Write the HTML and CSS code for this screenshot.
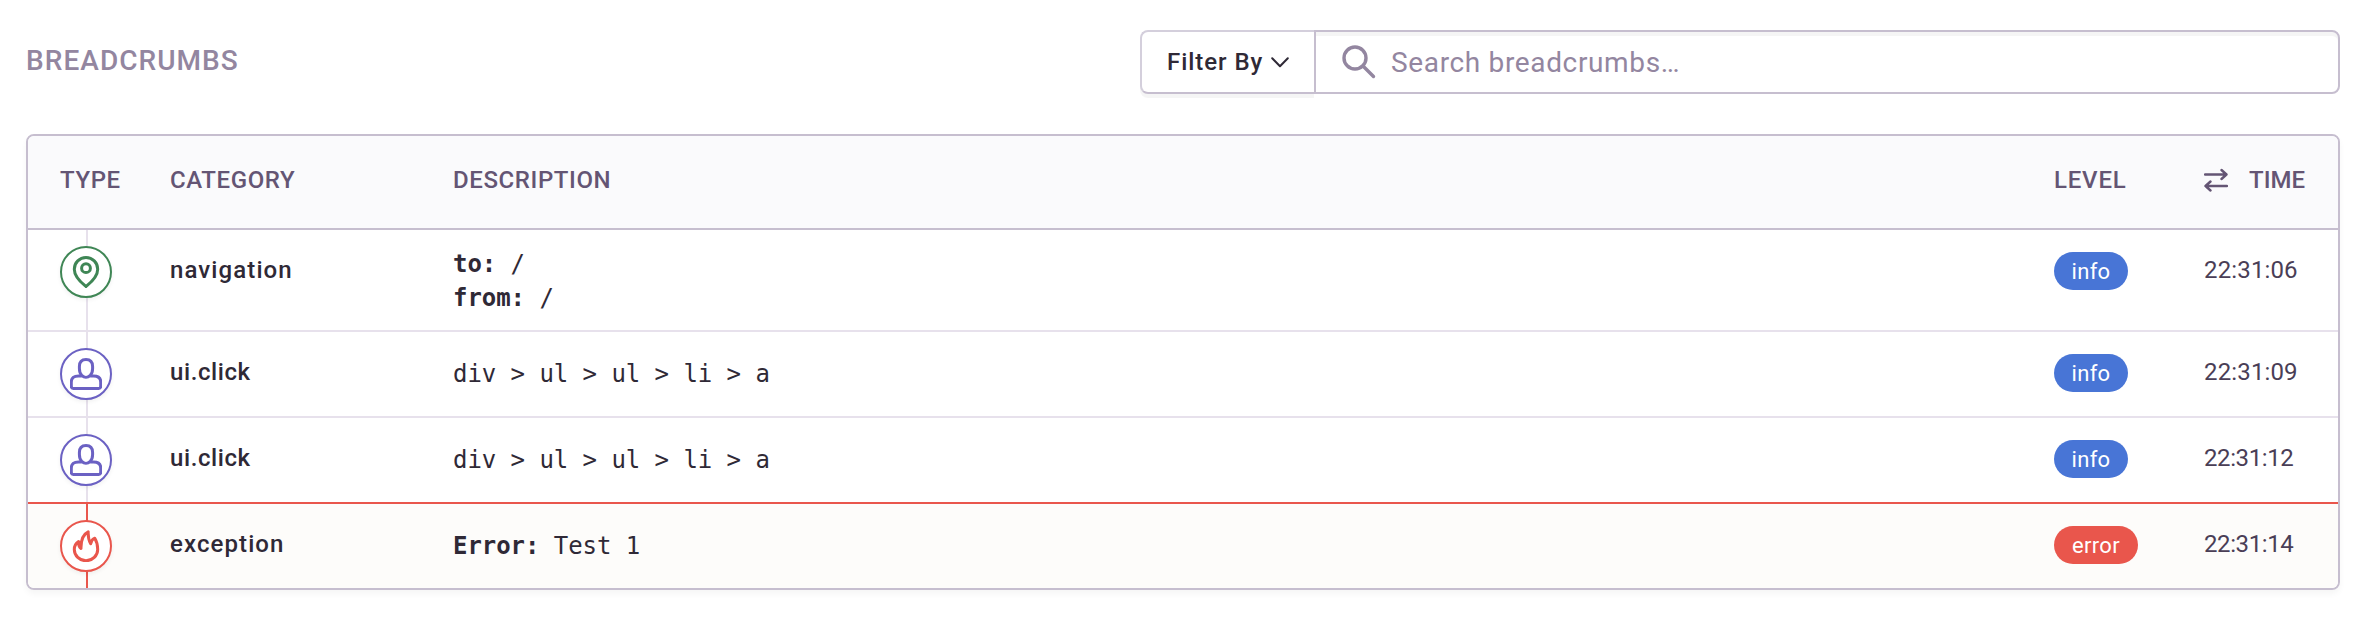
FILE: index.html
```html
<!DOCTYPE html>
<html lang="en">
<head>
<meta charset="utf-8">
<title>Breadcrumbs</title>
<link rel="stylesheet" href="styles.css">
</head>
<body>
<svg class="defs" aria-hidden="true">
  <symbol id="pin" viewBox="0 0 32 32"><path d="M16 30.5C13 28 4.300 21.500 4.300 13.200a11.700 11.700 0 0 1 23.400 0C27.700 21.500 19 28 16 30.500Z"/><circle cx="16" cy="12.200" r="4.400"/></symbol>
  <symbol id="user" viewBox="0 0 32 32"><path d="M12 17.600C10 16 9.400 13.500 9.400 10.500V8.500C9.400 4 12 1.500 16 1.500s6.600 2.500 6.600 7v2c0 3-.6 5.500-2.600 7.100-2.300 2.200-5.700 2.200-8 0Z"/><path d="M11 17.900H8.500C4 17.900 1.300 20 1.300 24v4.300c0 1.300.7 2.100 2 2.100h25.400c1.300 0 2-.8 2-2.100V24c0-4-2.700-6.100-7.200-6.100H21"/></symbol>
  <symbol id="fire" viewBox="0 0 32 32"><path d="M18.200 1.800C12.500 4.500 10.800 10 11 18.500 9.500 17.500 8.500 15 8.600 11.600 5.500 13.500 4.300 16.500 4.300 19.500a11.700 11.200 0 0 0 23.400 0c0-4-.9-8-2.900-11.300-2.300.8-3.500 2.800-4.100 5.500-1.800-3-2.700-7-2.500-11.900Z"/></symbol>
</svg>
<main class="page">
  <header class="top">
    <h1 class="title">BREADCRUMBS</h1>
    <div class="search">
      <button class="filter"><span class="filter-label">Filter By</span>
        <svg class="chevron" viewBox="0 0 18 11"><path d="M1.200 1.300 9 9.300l7.800-8"/></svg>
      </button>
      <div class="field">
        <svg class="lens" viewBox="0 0 34 34"><circle cx="13" cy="13" r="11"/><path d="M21 21 31.500 31.500"/></svg>
        <span class="placeholder">Search breadcrumbs…</span>
      </div>
    </div>
  </header>
  <section class="table">
    <div class="row head">
      <div class="th type">TYPE</div><div class="th category">CATEGORY</div><div class="th description">DESCRIPTION</div><div class="th level-head">LEVEL</div>
      <div class="th time-head"><svg class="swap" viewBox="0 0 24 24"><path d="M1 6.500h21.500M17.500 2l5 4.500-5 4.500M23 18H1.500M6.500 13.500l-5 4.500 5 4.500"/></svg><span class="time-label">TIME</span></div>
    </div>
    <div class="row body tall">
      <div class="rail"><span class="badge green"><svg class="icon"><use href="#pin"/></svg></span></div>
      <div class="name navigation">navigation</div>
      <div class="code"><div><b>to:</b> /</div><div><b>from:</b> /</div></div>
      <div class="level"><span class="pill">info</span></div><div class="time">22:31:06</div>
    </div>
    <div class="row body">
      <div class="rail"><span class="badge purple"><svg class="icon"><use href="#user"/></svg></span></div>
      <div class="name click">ui.click</div>
      <div class="code">div &gt; ul &gt; ul &gt; li &gt; a</div>
      <div class="level"><span class="pill">info</span></div><div class="time">22:31:09</div>
    </div>
    <div class="row body before-error">
      <div class="rail"><span class="badge purple"><svg class="icon"><use href="#user"/></svg></span></div>
      <div class="name click">ui.click</div>
      <div class="code">div &gt; ul &gt; ul &gt; li &gt; a</div>
      <div class="level"><span class="pill">info</span></div><div class="time narrow">22:31:12</div>
    </div>
    <div class="row body error">
      <div class="rail"><span class="badge red"><svg class="icon"><use href="#fire"/></svg></span></div>
      <div class="name exception">exception</div>
      <div class="code"><b>Error:</b> Test 1</div>
      <div class="level"><span class="pill danger">error</span></div><div class="time narrow">22:31:14</div>
    </div>
  </section>
</main>
</body>
</html>
```
FILE: styles.css
```css
* { box-sizing: border-box; }
body { margin: 0; background: #fff; color: #2f2936; font-family: Roboto, sans-serif; font-size: 24px; }
.defs { position: absolute; width: 0; height: 0; }
svg { fill: none; stroke: currentColor; stroke-linecap: round; stroke-linejoin: round; flex: none; }
.page { padding: 30px 30px 32px 26px; }
.top { display: flex; justify-content: space-between; height: 64px; margin-bottom: 40px; }
.title { margin: 15px 0 0; font-size: 28px; line-height: 32px; font-weight: 500; color: #9386a0; letter-spacing: 1.05px; }
.search { display: flex; width: 1200px; }
.filter { width: 174px; border: 2px solid #d4cfdc; border-bottom-color: #c6becf; border-right: 0; border-radius: 8px 0 0 8px; background: #fff; box-shadow: 0 4px 0 rgba(0,0,0,.04); padding: 0 0 0 25px; display: flex; align-items: center; gap: 8px; font: 500 24px Roboto, sans-serif; color: #2f2936; }
.filter-label { width: 96px; white-space: nowrap; text-align: left; letter-spacing: 0.95px; }
.chevron { width: 18px; height: 11px; stroke-width: 2; }
.field { flex: 1; border: 2px solid #c6becf; border-radius: 0 8px 8px 0; box-shadow: inset 0 4px 0 rgba(0,0,0,.04); display: flex; align-items: center; padding-left: 26px; color: #9386a0; }
.lens { width: 34px; height: 34px; stroke-width: 3.4; margin-right: 15px; }
.placeholder { font-size: 28px; letter-spacing: 0.65px; }
.table { border: 2px solid #c6becf; border-radius: 8px; overflow: hidden; box-shadow: 0 4px 6px rgba(0,0,0,.04); }
.row { display: grid; grid-template-columns: 110px 283px 1fr 150px 134px; padding-left: 32px; }
.head { height: 94px; border-bottom: 2px solid #c6becf; background: #fafafc; color: #645574; }
.th { padding-top: 30px; line-height: 28px; font-weight: 500; white-space: nowrap; letter-spacing: 0.6px; }
.level-head { letter-spacing: 0.8px; }
.time-head { display: flex; gap: 21px; letter-spacing: 0; }
.swap { width: 24px; height: 24px; stroke-width: 2.4; margin-top: 2px; }
.body { height: 86px; border-bottom: 2px solid #e7e1ec; }
.tall { height: 102px; }
.before-error { border-bottom-color: #e9564c; }
.error { height: 84px; border-bottom: 0; background: #fdfcfa; --rail: #e9564c; }
.rail { width: 52px; height: 100%; padding-top: 16px; background: linear-gradient(var(--rail, #e7e1ec), var(--rail, #e7e1ec)) 26px 0 / 2px 100% no-repeat; }
.badge { display: flex; align-items: center; justify-content: center; width: 52px; height: 52px; border: 2px solid; border-radius: 50%; background: #fff; box-shadow: 0 2px 4px rgba(0,0,0,.06); }
.icon { width: 32px; height: 32px; stroke-width: 3; }
.green { color: #3f8655; }
.purple { color: #6b61c3; }
.red { color: #e9564c; }
.name { padding-top: 26px; line-height: 28px; font-weight: 500; }
.navigation { letter-spacing: 1.1px; }
.click { letter-spacing: 0.6px; }
.exception { letter-spacing: 1.1px; }
.code { padding-top: 25px; font: 24px/34px "DejaVu Sans Mono", monospace; letter-spacing: -0.05px; }
.tall .code { padding-top: 17px; }
.level { padding-top: 22px; }
.pill { display: inline-flex; align-items: center; justify-content: center; width: 74px; height: 38px; border-radius: 19px; background: #4875d6; color: #fff; font-size: 22px; letter-spacing: 0.3px; }
.danger { width: 84px; background: #e9564c; }
.time { padding-top: 26px; line-height: 28px; color: #4a3e56; letter-spacing: 0.15px; }
.narrow { letter-spacing: -0.4px; }
```
